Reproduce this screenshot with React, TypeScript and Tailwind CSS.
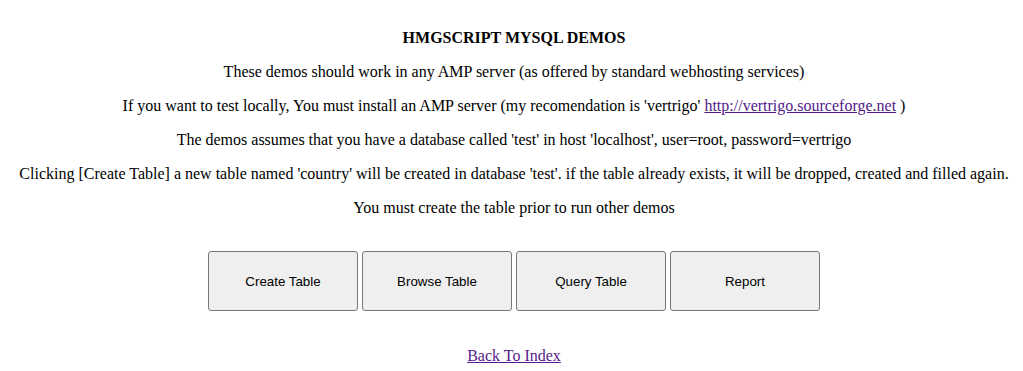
const buttons = ["Create Table", "Browse Table", "Query Table", "Report"];

export default function App() {
  return (
    <div
      className="w-full min-h-[371px] bg-white text-black pt-[29px] pl-[5px] flex flex-col items-center text-[16px] leading-[18px]"
      style={{ fontFamily: '"Liberation Serif", "Times New Roman", serif' }}
    >
      <h1 className="font-bold text-[16px] h-[18px]">HMGSCRIPT MYSQL DEMOS</h1>
      <p className="mt-[16px]">
        These demos should work in any AMP server (as offered by standard webhosting services)
      </p>
      <p className="mt-[16px]">
        If you want to test locally, You must install an AMP server (my recomendation is 'vertrigo'{" "}
        <a href="#" className="text-[#551a8b] underline">
          http://vertrigo.sourceforge.net
        </a>{" "}
        )
      </p>
      <p className="mt-[16px]">
        The demos assumes that you have a database called 'test' in host 'localhost', user=root, password=vertrigo
      </p>
      <p className="mt-[16px] whitespace-nowrap">
        Clicking [Create Table] a new table named 'country' will be created in database 'test'. if the table already exists, it will be dropped, created and filled again.
      </p>
      <p className="mt-[16px]">You must create the table prior to run other demos</p>
      <div className="mt-[34px] flex gap-[4px]">
        {buttons.map((b) => (
          <button
            key={b}
            className="w-[150px] h-[60px] pt-[2px] bg-[#efefef] border border-[#767676] rounded-[3px] text-[13.333px] text-black"
            style={{ fontFamily: '"Liberation Sans", Arial, sans-serif' }}
          >
            {b}
          </button>
        ))}
      </div>
      <a href="#" className="mt-[36px] text-[#551a8b] underline">
        Back To Index
      </a>
    </div>
  );
}
